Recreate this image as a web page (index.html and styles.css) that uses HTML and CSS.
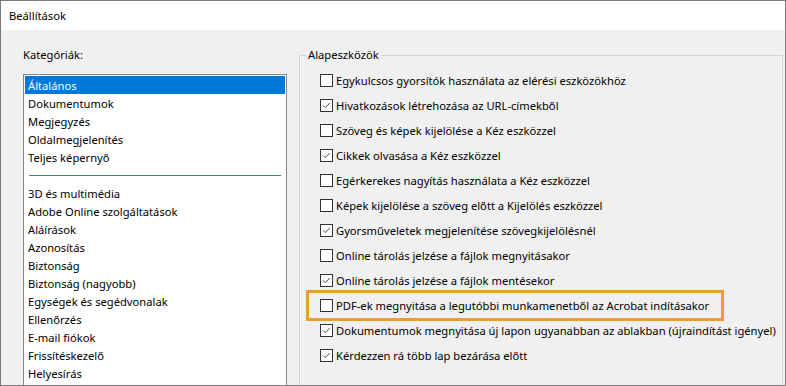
FILE: index.html
```html
<!DOCTYPE html>
<html lang="hu">
<head>
<meta charset="utf-8">
<title>Beállítások</title>
<link rel="stylesheet" href="styles.css">
</head>
<body>
<div class="window">
  <div class="titlebar">Beállítások</div>
  <div class="content">
    <div class="cats">
      <div class="cats-label">Kategóriák:</div>
      <div class="listbox">
        <div class="item selected">Általános</div>
        <div class="item">Dokumentumok</div>
        <div class="item">Megjegyzés</div>
        <div class="item">Oldalmegjelenítés</div>
        <div class="item">Teljes képernyő</div>
        <div class="sep"></div>
        <div class="item">3D és multimédia</div>
        <div class="item">Adobe Online szolgáltatások</div>
        <div class="item">Aláírások</div>
        <div class="item">Azonosítás</div>
        <div class="item">Biztonság</div>
        <div class="item">Biztonság (nagyobb)</div>
        <div class="item">Egységek és segédvonalak</div>
        <div class="item">Ellenőrzés</div>
        <div class="item">E-mail fiókok</div>
        <div class="item">Frissítéskezelő</div>
        <div class="item">Helyesírás</div>
      </div>
    </div>
    <fieldset class="group">
      <legend class="group-title">Alapeszközök</legend>
      <div class="row"><span class="cb"></span><span>Egykulcsos gyorsítók használata az elérési eszközökhöz</span></div>
      <div class="row"><span class="cb"><svg viewBox="0 0 13 13"><polyline points="2.5,6.5 5,9 10.5,3.5"/></svg></span><span>Hivatkozások létrehozása az URL-címekből</span></div>
      <div class="row"><span class="cb"></span><span>Szöveg és képek kijelölése a Kéz eszközzel</span></div>
      <div class="row"><span class="cb"><svg viewBox="0 0 13 13"><polyline points="2.5,6.5 5,9 10.5,3.5"/></svg></span><span>Cikkek olvasása a Kéz eszközzel</span></div>
      <div class="row"><span class="cb"></span><span>Egérkerekes nagyítás használata a Kéz eszközzel</span></div>
      <div class="row"><span class="cb"></span><span>Képek kijelölése a szöveg előtt a Kijelölés eszközzel</span></div>
      <div class="row"><span class="cb"><svg viewBox="0 0 13 13"><polyline points="2.5,6.5 5,9 10.5,3.5"/></svg></span><span>Gyorsműveletek megjelenítése szövegkijelölésnél</span></div>
      <div class="row"><span class="cb"></span><span>Online tárolás jelzése a fájlok megnyitásakor</span></div>
      <div class="row"><span class="cb"><svg viewBox="0 0 13 13"><polyline points="2.5,6.5 5,9 10.5,3.5"/></svg></span><span>Online tárolás jelzése a fájlok mentésekor</span></div>
      <div class="row highlight"><span class="cb"></span><span>PDF-ek megnyitása a legutóbbi munkamenetből az Acrobat indításakor</span></div>
      <div class="row"><span class="cb"><svg viewBox="0 0 13 13"><polyline points="2.5,6.5 5,9 10.5,3.5"/></svg></span><span>Dokumentumok megnyitása új lapon ugyanabban az ablakban (újraindítást igényel)</span></div>
      <div class="row"><span class="cb"><svg viewBox="0 0 13 13"><polyline points="2.5,6.5 5,9 10.5,3.5"/></svg></span><span>Kérdezzen rá több lap bezárása előtt</span></div>
    </fieldset>
  </div>
</div>
</body>
</html>
```

FILE: styles.css
```css
html, body {
  margin: 0;
  padding: 0;
}
body {
  font-family: "Noto Sans", "Open Sans", sans-serif;
  font-size: 11.2px;
  color: #000;
  background: #f0f0f0;
}
.window {
  width: 786px;
  height: 386px;
  box-sizing: border-box;
  border: 1px solid #7a7a7a;
  background: #f0f0f0;
  overflow: hidden;
  display: flex;
  flex-direction: column;
}
.titlebar {
  height: 29px;
  flex: none;
  background: #fff;
  padding-left: 8px;
  line-height: 29px;
  box-sizing: border-box;
}
.content {
  flex: 1;
  display: flex;
  padding-left: 22px;
  min-height: 0;
}
.cats {
  width: 264px;
  flex: none;
  display: flex;
  flex-direction: column;
}
.cats-label {
  height: 44px;
  line-height: 16px;
  padding-top: 17px;
  box-sizing: border-box;
}
.listbox {
  flex: 1;
  background: #fff;
  border: 1px solid #828790;
  border-bottom: none;
  padding: 1px;
  overflow: hidden;
}
.item {
  height: 18px;
  line-height: 19px;
  padding-left: 3px;
  white-space: nowrap;
}
.item.selected {
  background: #0078d7;
  color: #fff;
}
.sep {
  height: 1px;
  background: #2f7fae;
  margin: 9px 4px 8px 4px;
}
.group {
  flex: 1;
  margin: 17px 2px 0 12px;
  padding: 0 0 0 20px;
  border: 1px solid #d5d5d5;
  border-bottom: none;
  min-width: 0;
}
.group-title {
  padding: 0 2px;
  margin-left: -14px;
  line-height: 16px;
}
.row {
  height: 25px;
  display: flex;
  align-items: center;
  gap: 3px;
  white-space: nowrap;
}
.row:first-of-type {
  margin-top: 5px;
}
.cb {
  width: 13px;
  height: 13px;
  box-sizing: border-box;
  border: 1px solid #333;
  background: #fff;
  flex: none;
  display: block;
}
.cb svg {
  display: block;
  width: 11px;
  height: 11px;
  margin: 0;
}
.cb polyline {
  fill: none;
  stroke: #333;
  stroke-width: 1.1;
}
.row.highlight {
  width: fit-content;
  margin-left: -11px;
  padding: 0 12px 0 11px;
  outline: 3px solid #eb9c37;
}
```
